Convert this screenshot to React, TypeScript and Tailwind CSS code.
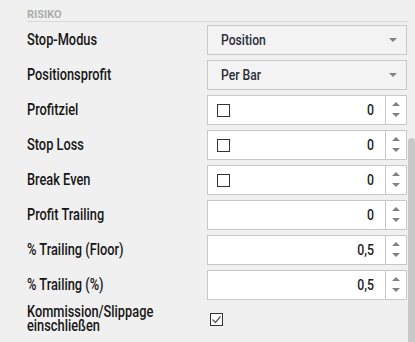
import { ReactNode } from "react";

// Risiko settings panel

function Caret() {
  return (
    <svg width="8" height="4" viewBox="0 0 8 4" className="fill-[#808080]">
      <path d="M0 0h8L4 4z" />
    </svg>
  );
}

function Spinner() {
  return (
    <div className="flex w-[21px] flex-col items-center justify-between border-l border-[#c8c8c8] pt-[6px] pb-[7px]">
      <svg width="8" height="4" viewBox="0 0 8 4" className="fill-[#808080]">
        <path d="M0 4h8L4 0z" />
      </svg>
      <svg width="8" height="4" viewBox="0 0 8 4" className="fill-[#808080]">
        <path d="M0 0h8L4 4z" />
      </svg>
    </div>
  );
}

function Box({ checked }: { checked?: boolean }) {
  return (
    <div className="flex h-[13px] w-[13px] items-center justify-center border border-[#333] bg-white">
      {checked && (
        <svg width="11" height="11" viewBox="0 0 11 11" fill="none" stroke="#555" strokeWidth="1.2">
          <path d="M1.5 5.5l3 3 5-6" />
        </svg>
      )}
    </div>
  );
}

function Select({ value }: { value: string }) {
  return (
    <div className="flex h-[30px] w-[200px] items-center justify-between border border-[#c8c8c8] bg-[#f3f3f3] pl-[13px] pr-[9px] text-[14px] font-medium text-[#2b2d3a]">
      <span className="inline-block origin-left scale-x-[0.87]">{value}</span>
      <Caret />
    </div>
  );
}

function NumberInput({ value, check }: { value: string; check?: boolean }) {
  return (
    <div className="flex h-[30px] w-[200px] border border-[#c8c8c8] bg-white">
      <div className="flex flex-1 items-center justify-between pl-[9px] pr-[11px] text-[14px] font-medium text-[#222]">
        <span>{check && <Box />}</span>
        <span className="inline-block origin-right scale-x-[0.88]">{value}</span>
      </div>
      <Spinner />
    </div>
  );
}

function Row({ label, children }: { label: ReactNode; children: ReactNode }) {
  return (
    <div className="flex items-center">
      <div className="w-[180px] text-[16px] font-medium leading-[14px] text-[#161616]">
        <span className="inline-block origin-left scale-x-[0.8] whitespace-nowrap">{label}</span>
      </div>
      {children}
    </div>
  );
}

export default function App() {
  return (
    <div
      className="flex h-[342px] w-[415px] overflow-hidden bg-[#f0f0f0]"
      style={{ fontFamily: "Roboto, 'Liberation Sans', sans-serif" }}
    >
      <div className="flex-1 pl-[27px]">
        <div className="border-b border-[#d8d8d8] pt-[9px] pb-[1px] text-[11px] font-bold leading-[11px] text-[#acacac]">
          RISIKO
        </div>
        <div className="mt-[3px] flex flex-col gap-[5px]">
          <Row label="Stop-Modus">
            <Select value="Position" />
          </Row>
          <Row label="Positionsprofit">
            <Select value="Per Bar" />
          </Row>
          <Row label="Profitziel">
            <NumberInput value="0" check />
          </Row>
          <Row label="Stop Loss">
            <NumberInput value="0" check />
          </Row>
          <Row label="Break Even">
            <NumberInput value="0" check />
          </Row>
          <Row label="Profit Trailing">
            <NumberInput value="0" />
          </Row>
          <Row label="% Trailing (Floor)">
            <NumberInput value="0,5" />
          </Row>
          <Row label="% Trailing (%)">
            <NumberInput value="0,5" />
          </Row>
          <Row label={<>Kommission/Slippage<br />einschließen</>}>
            <div className="pl-[3px]">
              <Box checked />
            </div>
          </Row>
        </div>
      </div>
      <div className="w-[7px] pt-[138px]">
        <div className="h-full rounded-t-[4px] bg-[#c8c8c8]" />
      </div>
    </div>
  );
}
